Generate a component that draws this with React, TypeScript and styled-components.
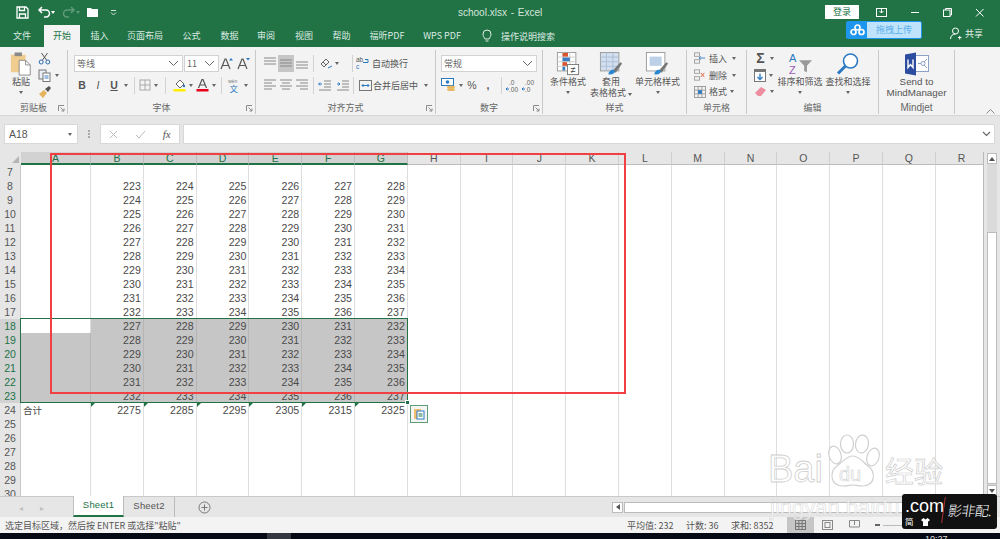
import React from 'react';
import styled, { createGlobalStyle } from 'styled-components';

const GlobalStyle = createGlobalStyle`
  html, body { margin: 0; padding: 0; background: #000; }
  * { box-sizing: border-box; }
  body { font-family: "Noto Sans CJK SC", "Liberation Sans", sans-serif; }
`;

const Page = styled.div`
  position: relative;
  width: 1000px;
  height: 539px;
  overflow: hidden;
  background: #f3f3f3;
  color: #444;
`;

/* ---------- title ---------- */
const TitleBar = styled.div`
  display: flex;
  align-items: center;
  height: 24px;
  background: #217346;
  color: #e8f0ea;
  padding-left: 14px;
`;
const Qat = styled.div`
  display: flex;
  align-items: center;
  width: 340px;
`;
const DocTitle = styled.div`
  width: 471px;
  padding-left: 104px;
  font: 10px "Liberation Sans", sans-serif;
  word-spacing: 1px;
  color: #d7e6dc;
`;
const Login = styled.div`
  width: 34px;
  height: 14px;
  background: #fff;
  color: #217346;
  font-size: 9px;
  line-height: 14px;
  text-align: center;
`;
const WinButtons = styled.div`
  display: flex;
  align-items: center;
  margin-left: 17px;
  gap: 23px;
`;

const TabRow = styled.div`
  position: relative;
  display: flex;
  align-items: flex-end;
  height: 23px;
  background: #217346;
`;
const Tab = styled.div<{ $w: number; $active?: boolean }>`
  width: ${(p) => p.$w}px;
  height: 22px;
  text-align: center;
  font-size: 9px;
  line-height: 21px;
  color: ${(p) => (p.$active ? '#217346' : '#dcebe2')};
  background: ${(p) => (p.$active ? '#f3f3f3' : 'transparent')};
`;
const SearchTab = styled.div`
  display: flex;
  align-items: center;
  gap: 9px;
  margin-left: 12px;
  height: 22px;
  font-size: 9px;
  color: #dcebe2;
`;
const Upload = styled.div`
  position: absolute;
  left: 846px;
  top: -3px;
  display: flex;
  width: 76px;
  height: 18px;
  border-radius: 2px;
  overflow: hidden;
  border: 1px solid #1e96ee;
  background: #1e96ee;
`;
const UploadMark = styled.svg`
  position: absolute;
  left: 3px;
  top: 2px;
`;
const UploadLabel = styled.div`
  flex: 1;
  margin-left: 20px;
  background: #bfe3fa;
  color: #58aeea;
  font-size: 9px;
  line-height: 15px;
  text-align: center;
`;
const Share = styled.div`
  position: absolute;
  left: 950px;
  top: 3px;
  display: flex;
  align-items: center;
  gap: 3px;
  font-size: 9px;
  color: #e3eee7;
`;

/* ---------- ribbon ---------- */
const Ribbon = styled.div`
  position: relative;
  display: flex;
  height: 69px;
  background: #f3f3f3;
  border-bottom: 1px solid #d6d6d6;
  font-size: 9px;
  color: #555;
`;
const Group = styled.div<{ $w: number }>`
  position: relative;
  display: flex;
  flex-direction: column;
  width: ${(p) => p.$w}px;
  height: 64px;
  margin-top: 3px;
  border-right: 1px solid #c9c9c9;
`;
const GroupBody = styled.div`
  display: flex;
  flex: 1;
  min-height: 0;
`;
const GroupLabel = styled.div<{ $latin?: boolean }>`
  height: 14px;
  text-align: center;
  font: ${(p) => (p.$latin ? '10px/15px "Liberation Sans", sans-serif' : '9px/15px "Noto Sans CJK SC", sans-serif')};
  color: #666;
`;
const LauncherMark = styled.svg`
  position: absolute;
  right: 2px;
  bottom: 2px;
`;
const Launcher = () => (
  <LauncherMark width="7" height="7" viewBox="0 0 7 7" fill="none" stroke="#8a8a8a">
    <path d="M.5 6V.5H6M2.5 2.5L6 6M6 3.5V6H3.5" />
  </LauncherMark>
);
const CollapseMark = styled.svg`
  position: absolute;
  left: 986px;
  top: 62px;
`;
const ToolColumn = styled.div<{ $w?: number; $pad?: number }>`
  display: flex;
  flex-direction: column;
  width: ${(p) => (p.$w ? `${p.$w}px` : 'auto')};
  padding-left: ${(p) => p.$pad ?? 0}px;
`;
const ToolRow = styled.div<{ $gap?: number; $h?: number }>`
  display: flex;
  align-items: center;
  gap: ${(p) => p.$gap ?? 0}px;
  height: ${(p) => p.$h ?? 17}px;
`;
const Space = styled.span<{ $w: number }>`
  flex: none;
  width: ${(p) => p.$w}px;
`;
const Caret = styled.span<{ $mx?: number; $mt?: number; $color?: string }>`
  display: inline-block;
  flex: none;
  width: 0;
  height: 0;
  margin: ${(p) => p.$mt ?? 0}px ${(p) => p.$mx ?? 0}px 0;
  border-left: 2.5px solid transparent;
  border-right: 2.5px solid transparent;
  border-top: 3px solid ${(p) => p.$color ?? '#666'};
`;
const VSep = styled.span<{ $mx?: number }>`
  flex: none;
  width: 1px;
  height: 17px;
  margin: 0 ${(p) => p.$mx ?? 4}px;
  background: #d2d2d2;
`;
const BigButton = styled.div<{ $w: number; $latin?: boolean; $pl?: number }>`
  display: flex;
  flex-direction: column;
  align-items: center;
  flex: none;
  width: ${(p) => p.$w}px;
  padding: 2px 0 0 ${(p) => p.$pl ?? 0}px;
  font: ${(p) => (p.$latin ? '9.8px/11px "Liberation Sans", sans-serif' : '9px/11px "Noto Sans CJK SC", sans-serif')};
  color: #555;
  white-space: nowrap;
  svg { display: block; flex: none; height: 24px; }
`;
const SelectBox = styled.div<{ $w: number }>`
  display: flex;
  align-items: center;
  justify-content: space-between;
  width: ${(p) => p.$w}px;
  height: 17px;
  padding: 0 3px 0 2px;
  background: #fff;
  border: 1px solid #d2d2d2;
  font-size: 9px;
  color: #666;
`;
const Chevron = () => (
  <svg width="11" height="7" viewBox="0 0 11 7"><path d="M1 1l4.5 4.5L10 1" fill="none" stroke="#666" /></svg>
);
const Letter = styled.span<{ $w: number; $style?: string; $under?: boolean }>`
  flex: none;
  width: ${(p) => p.$w}px;
  text-align: center;
  font: ${(p) => p.$style ?? 'bold'} 10.5px "Liberation Sans", sans-serif;
  text-decoration: ${(p) => (p.$under ? 'underline' : 'none')};
  color: #555;
`;
const Sigma = styled.span`
  flex: none;
  width: 13px;
  text-align: center;
  font: bold 14px/14px "Liberation Sans", sans-serif;
  color: #555;
`;
const AlignSlot = styled.span<{ $on?: boolean }>`
  display: flex;
  align-items: center;
  justify-content: center;
  flex: none;
  width: 16px;
  height: 17px;
  background: ${(p) => (p.$on ? '#c6c6c6' : 'transparent')};
`;
const Smalltext = styled.span<{ $ml?: number }>`
  margin-left: ${(p) => p.$ml ?? 0}px;
  font-size: 9px;
  white-space: nowrap;
`;

const Lines = ({ kind }: { kind: 'l' | 'c' | 'r' | 't' | 'm' | 'b' }) => {
  const y = kind === 't' ? [3, 6, 9] : kind === 'b' ? [7, 10, 13] : kind === 'm' ? [5, 8, 11] : [3, 6, 9, 12];
  const span = (i: number) => {
    if (kind === 't' || kind === 'm' || kind === 'b') return [2, 14];
    const len = i % 2 ? 8 : 12;
    if (kind === 'l') return [2, 2 + len];
    if (kind === 'r') return [14 - len, 14];
    return [8 - len / 2, 8 + len / 2];
  };
  return (
    <svg width="16" height="16" viewBox="0 0 16 16">
      {y.map((v, i) => (
        <line key={v} x1={span(i)[0]} x2={span(i)[1]} y1={v} y2={v} stroke="#888" />
      ))}
    </svg>
  );
};

const PasteIcon = () => (
  <svg width="24" height="26" viewBox="0 0 24 26">
    <rect x="1" y="3" width="16" height="19" fill="#f0cd8e" />
    <rect x="5" y="0.5" width="8" height="4" fill="#8a8a8a" />
    <path d="M10 9h7l5 5v11H10z" fill="#fff" stroke="#888" />
    <path d="M17 9v5h5" fill="none" stroke="#888" />
  </svg>
);
const ScissorIcon = () => (
  <svg width="13" height="13" viewBox="0 0 13 13" fill="none" stroke="#2b6cb0">
    <circle cx="3.2" cy="10" r="2" />
    <circle cx="9.8" cy="10" r="2" />
    <path d="M4.3 8.3L9.5 1M8.7 8.3L3.5 1" stroke="#555" />
  </svg>
);
const CopyIcon = () => (
  <svg width="13" height="13" viewBox="0 0 13 13" fill="#fff" stroke="#777">
    <rect x="1" y="1" width="7" height="9" fill="#e8f0f8" />
    <rect x="5" y="4" width="7" height="8.5" />
    <path d="M6.5 7h4M6.5 9h4" stroke="#3b7dc0" />
  </svg>
);
const BrushIcon = () => (
  <svg width="14" height="13" viewBox="0 0 14 13">
    <path d="M1 9l5-4 3 3-4 5z" fill="#e4b45f" />
    <path d="M7 4l4-3 2 2-3 4z" fill="#555" />
  </svg>
);
const FontGrow = ({ up }: { up: boolean }) => (
  <svg width="14" height="13" viewBox="0 0 14 13">
    <path d="M1 12L5 2h1l4 10M3 8.5h5" fill="none" stroke="#555" strokeWidth="1.2" />
    <path d={up ? 'M9 3.5L11 1l2 2.5z' : 'M9 1l2 2.5L13 1z'} fill="#2b79c2" />
  </svg>
);
const BorderIcon = () => (
  <svg width="12" height="12" viewBox="0 0 12 12" fill="none" stroke="#aaa">
    <rect x="1" y="1" width="10" height="10" />
    <path d="M6 1v10M1 6h10" />
  </svg>
);
const FillIcon = () => (
  <svg width="13" height="14" viewBox="0 0 13 14">
    <path d="M3 6l4-4 4 4-4 4z" fill="#fff" stroke="#666" />
    <circle cx="11" cy="8" r="1.2" fill="#2b79c2" />
    <rect x="0.5" y="11" width="12" height="2.5" fill="#ffee00" />
  </svg>
);
const ColorIcon = () => (
  <svg width="13" height="14" viewBox="0 0 13 14">
    <path d="M2.5 10L6 1.5h1L10.5 10M4 7h5" fill="none" stroke="#555" strokeWidth="1.2" />
    <rect x="0.5" y="11" width="12" height="2.5" fill="#e8001c" />
  </svg>
);
const PinyinIcon = () => (
  <svg width="14" height="16" viewBox="0 0 14 16">
    <text x="1" y="6" fontSize="5" fontFamily="Liberation Sans" fill="#777">wén</text>
    <text x="2.5" y="15" fontSize="8.5" fontFamily="Noto Sans CJK SC" fill="#2b79c2">文</text>
  </svg>
);
const OrientIcon = () => (
  <svg width="14" height="13" viewBox="0 0 14 13" fill="none" stroke="#666">
    <path d="M2 7l5-5 3 3-5 5zM4 5l3 3" />
    <path d="M9 11l4-2" stroke="#2b79c2" />
  </svg>
);
const WrapIcon = () => (
  <svg width="14" height="14" viewBox="0 0 14 14">
    <text x="0" y="6" fontSize="6.5" fontFamily="Liberation Sans" fill="#555">ab</text>
    <text x="0" y="13" fontSize="6.5" fontFamily="Liberation Sans" fill="#2b79c2">c</text>
    <path d="M9 3.5h3v3H7" fill="none" stroke="#2b79c2" />
  </svg>
);
const IndentIcon = ({ right }: { right?: boolean }) => (
  <svg width="14" height="13" viewBox="0 0 14 13">
    <path d="M6 2h7M6 5h7M6 8h7M1 11h12" stroke="#888" />
    <path d={right ? 'M1 5h3M2.5 3.5L4 5 2.5 6.5' : 'M1 5h3M2 3.5L.5 5 2 6.5'} stroke="#2b79c2" fill="none" />
  </svg>
);
const MergeIcon = () => (
  <svg width="13" height="13" viewBox="0 0 13 13" fill="none">
    <rect x="0.5" y="1.5" width="12" height="10" stroke="#777" />
    <path d="M3 6.5h7M3 6.5l1.5-1.5M3 6.5L4.5 8M10 6.5L8.5 5M10 6.5L8.5 8" stroke="#2b79c2" />
  </svg>
);
const MoneyIcon = () => (
  <svg width="16" height="14" viewBox="0 0 16 14">
    <rect x="0.5" y="0.5" width="12" height="7" fill="#fff" stroke="#2b79c2" />
    <circle cx="6.5" cy="4" r="1.8" fill="#2b79c2" />
    <ellipse cx="10" cy="9" rx="4" ry="1.5" fill="#e8b860" />
    <ellipse cx="10" cy="11.5" rx="4" ry="1.5" fill="#e8b860" />
  </svg>
);
const DecIcon = ({ top, bottom }: { top: string; bottom: string }) => (
  <svg width="15" height="15" viewBox="0 0 15 15">
    <text x="3" y="6.5" fontSize="6.5" fontFamily="Liberation Sans" fill="#666">{top}</text>
    <text x="3" y="13.5" fontSize="6.5" fontFamily="Liberation Sans" fill="#666">{bottom}</text>
    <path d="M0 11h3M1.5 9.5L0 11l1.5 1.5" stroke="#2b79c2" fill="none" />
  </svg>
);
const CondIcon = () => (
  <svg width="24" height="26" viewBox="0 0 24 26">
    <rect x="0.5" y="0.5" width="20" height="20" fill="#fff" stroke="#999" />
    <path d="M0.5 5.5h20M0.5 10.5h20M0.5 15.5h20M7 .5v20M14 .5v20" stroke="#ccc" />
    <rect x="6" y="1" width="6" height="4" fill="#d8552f" />
    <rect x="6" y="6" width="8" height="4" fill="#3b7dc0" />
    <rect x="6" y="11" width="5" height="4" fill="#d8552f" />
    <rect x="6" y="16" width="3" height="4" fill="#3b7dc0" />
    <rect x="11.5" y="13.5" width="12" height="11" fill="#fff" stroke="#777" />
    <text x="14.5" y="23" fontSize="10" fill="#444" fontFamily="Liberation Sans">≠</text>
  </svg>
);
const TableIcon = ({ cell }: { cell?: boolean }) => (
  <svg width="25" height="26" viewBox="0 0 25 26">
    <rect x="0.5" y="0.5" width="20" height="20" fill={cell ? '#fff' : '#d3dfee'} stroke="#999" />
    {cell ? <rect x="4" y="5" width="13" height="10" fill="#bcd0e8" /> : <path d="M0.5 5.5h20M0.5 10.5h20M0.5 15.5h20M7 .5v20M14 .5v20" stroke="#a9bdd6" />}
    <path d="M14 20l8-9 2 1.5-7 10z" fill="#777" />
    <path d="M9 24c1-4 4-6 7-4 1 3-3 5-7 4z" fill="#2b87d1" />
  </svg>
);
const InsertIcon = ({ x }: { x?: boolean }) => (
  <svg width="12" height="12" viewBox="0 0 14 13" fill="none" stroke="#999">
    <rect x="0.5" y="0.5" width="6" height="4" />
    <rect x="0.5" y="8.5" width="6" height="4" />
    {x ? <path d="M8 4l4 5M12 4L8 9" stroke="#d8552f" /> : <path d="M13 6.5H6M8 4.5l-2 2 2 2" stroke="#2b79c2" />}
  </svg>
);
const FormatIcon = () => (
  <svg width="12" height="12" viewBox="0 0 13 13" fill="none" stroke="#999">
    <rect x="0.5" y="0.5" width="12" height="12" />
    <path d="M.5 4.5h12M.5 8.5h12M4.5 .5v12M8.5 .5v12" />
    <rect x="4.5" y="4.5" width="4" height="4" fill="#2b79c2" stroke="none" />
  </svg>
);
const FillDown = () => (
  <svg width="12" height="13" viewBox="0 0 12 13">
    <rect x="0.5" y="0.5" width="11" height="12" fill="#fff" stroke="#777" />
    <rect x="0.5" y="0.5" width="11" height="2.5" fill="#777" />
    <path d="M6 4.5v6M3.5 8L6 10.5 8.5 8" stroke="#2b79c2" fill="none" strokeWidth="1.3" />
  </svg>
);
const EraserIcon = () => (
  <svg width="13" height="11" viewBox="0 0 13 11">
    <path d="M1 7l6-6 5 3-5 6H4z" fill="#ec8da0" />
  </svg>
);
const SortIcon = () => (
  <svg width="30" height="26" viewBox="0 0 30 26">
    <text x="3" y="11" fontSize="12" fontFamily="Liberation Sans" fill="#2b79c2">A</text>
    <text x="3" y="24" fontSize="12" fontFamily="Liberation Sans" fill="#9b59b6">Z</text>
    <path d="M14 9h14l-5.5 6v7l-3-1.5V15z" fill="#999" />
  </svg>
);
const FindIcon = () => (
  <svg width="24" height="24" viewBox="0 0 24 24" fill="none">
    <circle cx="14.5" cy="9" r="7" stroke="#2b79c2" strokeWidth="1.6" fill="#fff" />
    <path d="M9.5 14L2 21.5" stroke="#2b79c2" strokeWidth="3" />
  </svg>
);
const MindIcon = () => (
  <svg width="24" height="23" viewBox="0 0 24 23">
    <rect x="6" y="3" width="17.5" height="16" fill="#fff" stroke="#8fa0c8" />
    <path d="M13 11h3M19 9.500l3-3M19 12.500l3 3" stroke="#8fa0c8" fill="none" />
    <circle cx="18" cy="11" r="2" fill="none" stroke="#8fa0c8" />
    <path d="M0 2l11-2v23L0 21z" fill="#2c4d9f" />
    <path d="M3 7v8l2.5-3L8 15V7" fill="none" stroke="#fff" strokeWidth="1.4" />
  </svg>
);

/* ---------- formula ---------- */
const FormulaBar = styled.div`
  display: flex;
  align-items: center;
  height: 36px;
  padding: 0 5px 0 4px;
  background: #e6e6e6;
`;
const NameBox = styled.div`
  display: flex;
  align-items: center;
  justify-content: space-between;
  width: 74px;
  height: 20px;
  padding: 0 5px 0 4px;
  background: #fff;
  border: 1px solid #d8d8d8;
  font: 10.5px "Liberation Sans", sans-serif;
  color: #555;
`;
const Dots = styled.div`
  width: 2px;
  height: 8px;
  margin: 0 10px;
  border-left: 2px dotted #aaa;
`;
const FnBox = styled.div`
  display: flex;
  align-items: center;
  justify-content: space-around;
  width: 80px;
  height: 20px;
  background: #fff;
  border: 1px solid #d8d8d8;
`;
const FxMark = styled.span`
  font: italic 11px "Liberation Serif", serif;
  color: #555;
`;
const FormulaInput = styled.div`
  display: flex;
  align-items: center;
  justify-content: flex-end;
  flex: 1;
  height: 20px;
  margin-left: 3px;
  padding-right: 3px;
  background: #fff;
  border: 1px solid #d8d8d8;
`;

/* ---------- sheet ---------- */
const Sheet = styled.div`
  position: relative;
  height: 344px;
  display: flex;
  background: #e6e6e6;
  overflow: hidden;
`;
const GridArea = styled.div`
  width: 984px;
  height: 344px;
  overflow: hidden;
  background: #fff;
  border-right: 1px solid #b9b9b9;
`;
const ColHeaders = styled.div`
  display: grid;
  grid-template-columns: 21px 70px repeat(17, 52.8px);
  height: 13px;
  background: #e6e6e6;
`;
const Corner = styled.div`
  position: relative;
  background: #e6e6e6;
  &::after {
    content: '';
    position: absolute;
    right: 2px;
    bottom: 2px;
    border-left: 7px solid transparent;
    border-bottom: 7px solid #b5b5b5;
  }
`;
const ColHead = styled.div<{ $sel?: boolean }>`
  height: 13px;
  text-align: center;
  font: 10.5px/13px "Liberation Sans", sans-serif;
  color: ${(p) => (p.$sel ? '#217346' : '#555')};
  background: ${(p) => (p.$sel ? '#d2d2d2' : '#e6e6e6')};
  border-right: 1px solid ${(p) => (p.$sel ? '#bdbdbd' : '#cfcfcf')};
  border-bottom: ${(p) => (p.$sel ? '2px solid #217346' : '1px solid #bcbcbc')};
`;
const Row = styled.div`
  display: grid;
  grid-template-columns: 21px 70px repeat(17, 52.8px);
  height: 14px;
`;
const RowHead = styled.div<{ $sel?: boolean }>`
  text-align: center;
  font: 10.5px/14px "Liberation Sans", sans-serif;
  color: ${(p) => (p.$sel ? '#217346' : '#555')};
  background: ${(p) => (p.$sel ? '#d2d2d2' : '#e6e6e6')};
  border-bottom: 1px solid ${(p) => (p.$sel ? '#bdbdbd' : '#cfcfcf')};
  border-right: 1px solid #c8c8c8;
`;
const Cell = styled.div<{ $shade?: boolean; $flag?: boolean; $text?: boolean }>`
  position: relative;
  padding: 0 2px;
  text-align: ${(p) => (p.$text ? 'left' : 'right')};
  font: ${(p) => (p.$text ? '9.5px/14px "Noto Sans CJK SC", sans-serif' : '10.6px/15px "Liberation Sans", sans-serif')};
  color: #4a4a4a;
  background: ${(p) => (p.$shade ? '#c6c6c6' : '#fff')};
  border-right: 1px solid ${(p) => (p.$shade ? '#b5b5b5' : '#dedede')};
  border-bottom: 1px solid ${(p) => (p.$shade ? '#b5b5b5' : '#e2e2e2')};
  &::before {
    content: ${(p) => (p.$flag ? "''" : 'none')};
    position: absolute;
    left: 0;
    top: 0;
    border-top: 4px solid #217346;
    border-right: 4px solid transparent;
  }
`;
const SelectionBox = styled.div`
  position: absolute;
  left: 20px;
  top: 166px;
  width: 388px;
  height: 85px;
  border: 1.5px solid #217346;
  pointer-events: none;
`;
const Handle = styled.div`
  position: absolute;
  right: -3px;
  bottom: -3px;
  width: 5px;
  height: 5px;
  background: #217346;
  border: 1px solid #fff;
`;
const PasteOptions = styled.div`
  position: absolute;
  left: 410px;
  top: 253px;
  display: flex;
  align-items: center;
  justify-content: center;
  width: 18px;
  height: 18px;
  background: #f4f4f4;
  border: 1px solid #5d9d78;
`;
const RedBox = styled.div`
  position: absolute;
  left: 50px;
  top: 1px;
  width: 576px;
  height: 241px;
  border: 2.5px solid #f23f42;
  pointer-events: none;
`;
const VScroll = styled.div`
  display: flex;
  flex-direction: column;
  width: 16px;
  height: 344px;
  padding: 1px 3px 0;
  background: #e6e6e6;
`;
const VTrack = styled.div`
  display: flex;
  flex-direction: column;
  height: 343px;
  background: #dadada;
`;
const ScrollArrow = styled.div`
  display: flex;
  align-items: center;
  justify-content: center;
  flex: none;
  height: 11px;
  background: #fff;
  border: 1px solid #bbb;
`;
const VThumb = styled.div`
  height: 252px;
  margin: 68px 0 1px;
  background: #fff;
  border: 1px solid #bbb;
`;

/* ---------- bottom ---------- */
const TabsBar = styled.div`
  display: flex;
  align-items: flex-end;
  height: 21px;
  background: #e6e6e6;
  border-top: 1px solid #c9c9c9;
`;
const NavArrows = styled.div`
  display: flex;
  justify-content: space-around;
  align-items: center;
  width: 73px;
  height: 20px;
  padding: 0 20px 0 10px;
  color: #c0c0c0;
  font-size: 8px;
`;
const SheetTab = styled.div<{ $active?: boolean }>`
  width: 51px;
  height: ${(p) => (p.$active ? '21px' : '20px')};
  text-align: center;
  font: 9.5px/18px "Liberation Sans", sans-serif;
  letter-spacing: 0.2px;
  color: ${(p) => (p.$active ? '#217346' : '#555')};
  background: ${(p) => (p.$active ? '#fff' : 'transparent')};
  border-left: ${(p) => (p.$active ? '1px solid #c0c0c0' : 0)};
  border-right: 1px solid #bbb;
  border-bottom: ${(p) => (p.$active ? '2px solid #217346' : 0)};
`;
const AddSheet = styled.div`
  display: flex;
  align-items: center;
  height: 20px;
  margin-left: 23px;
`;
const HScroll = styled.div`
  display: flex;
  align-items: center;
  margin-left: 401px;
  height: 20px;
  width: 376px;
`;
const HArrow = styled(ScrollArrow)`
  width: 11px;
`;
const HThumb = styled.div`
  flex: 1;
  height: 11px;
  margin-left: 1px;
  background: #fff;
  border: 1px solid #bbb;
`;
const StatusBar = styled.div`
  display: flex;
  align-items: center;
  height: 16px;
  padding-left: 5px;
  background: #f3f3f3;
  font-size: 9px;
  color: #555;
`;
const StatusMsg = styled.div`
  width: 622px;
`;
const Stat = styled.div<{ $w: number }>`
  width: ${(p) => p.$w}px;
  font-size: 9px;
`;
const ViewBtn = styled.div<{ $on?: boolean }>`
  display: flex;
  align-items: center;
  justify-content: center;
  width: 27px;
  height: 16px;
  background: ${(p) => (p.$on ? '#c6c6c6' : 'transparent')};
`;
const ZoomMinus = styled.div`
  width: 5px;
  height: 2px;
  margin-left: 7px;
  background: #666;
`;
const ZoomTrack = styled.div`
  width: 40px;
  height: 1px;
  margin-left: 3px;
  background: #bbb;
`;
const Taskbar = styled.div`
  position: relative;
  height: 6px;
  background: #050a14;
  overflow: hidden;
`;
const TaskItem = styled.div`
  position: absolute;
  left: 267px;
  top: 0;
  width: 24px;
  height: 6px;
  background: #33373f;
`;
const Clock = styled.div`
  position: absolute;
  left: 925px;
  top: 1px;
  font: 9px/10px "Liberation Sans", sans-serif;
  color: #ddd;
`;

/* ---------- watermark ---------- */
const Watermark = styled.div`
  position: absolute;
  left: 768px;
  top: 434px;
  width: 200px;
  pointer-events: none;
`;
const MarkMain = styled.div`
  display: flex;
  align-items: flex-end;
  height: 54px;
`;
const MarkWord = styled.span`
  font: 38px/38px "Liberation Sans", sans-serif;
  color: rgba(255, 255, 255, 0.75);
  -webkit-text-stroke: 0.8px #cfcfcf;
`;
const MarkJing = styled.span`
  margin-left: 2px;
  font: 29px/36px "Noto Sans CJK SC", sans-serif;
  color: rgba(255, 255, 255, 0.75);
  -webkit-text-stroke: 0.7px #cfcfcf;
`;
const Paw = styled.div`
  position: relative;
  flex: none;
  width: 60px;
  height: 54px;
`;
const PawText = styled.span`
  position: absolute;
  left: 16px;
  top: 30px;
  font: 20px/20px "Liberation Sans", sans-serif;
  color: rgba(255, 255, 255, 0.75);
  -webkit-text-stroke: 0.6px #cfcfcf;
`;
const MarkSub = styled.div`
  margin: 8px 0 0 2px;
  font: 22px/24px "Liberation Sans", sans-serif;
  white-space: nowrap;
  color: rgba(255, 255, 255, 0.65);
  -webkit-text-stroke: 0.5px #d4d4d4;
`;
const Badge = styled.div`
  position: absolute;
  left: 902px;
  top: 494px;
  width: 95px;
  height: 35px;
  padding: 3px;
  border-radius: 3px;
  background: #111;
  color: #fff;
  overflow: hidden;
`;
const BadgeCom = styled.div`
  font: 18px/18px "Liberation Sans", sans-serif;
`;
const BadgeSmall = styled.div`
  display: flex;
  gap: 7px;
  align-items: center;
  margin-top: 1px;
  font-size: 8.5px;
  line-height: 11px;
`;
const Signature = styled.div`
  position: absolute;
  left: 41px;
  top: 3px;
  padding-left: 4px;
  border-left: 1px solid #a33;
  font: 300 14px/26px "Noto Sans CJK SC", sans-serif;
  letter-spacing: -0.5px;
  transform: skewX(-8deg);
`;

const columns = 'ABCDEFGHIJKLMNOPQR'.split('');

// 行号 -> 数值
const cellValue = (row: number, col: number) => {
  if (row >= 8 && row <= 17) return 223 + (row - 8) + col;
  if (row >= 18 && row <= 23) return 227 + (row - 18) + col;
  if (row === 24) return 2275 + col * 10;
  return null;
};

const rows = Array.from({ length: 24 }, (_, i) => i + 7);

const App = () => (
  <Page>
    <GlobalStyle />
    <TitleBar>
      <Qat>
        <Space $w={2} />
        <svg width="13" height="13" viewBox="0 0 13 13" fill="none" stroke="#fff" strokeWidth="1.3">
          <path d="M1 1h9l2 2v9H1z" />
          <path d="M3.5 1v3.5h5V1M3.5 12V8h6v4" />
        </svg>
        <Space $w={8} />
        <svg width="14" height="12" viewBox="0 0 14 12" fill="none" stroke="#fff" strokeWidth="1.5">
          <path d="M5 1L2 4l3 3M2 4h7a3.5 3.5 0 0 1 0 7H7" />
        </svg>
        <Caret $color="#fff" />
        <Space $w={7} />
        <svg width="14" height="12" viewBox="0 0 14 12" fill="none" stroke="#5f9a7a" strokeWidth="1.5">
          <path d="M9 1l3 3-3 3M12 4H5a3.5 3.5 0 0 0 0 7h2" />
        </svg>
        <Caret $color="#5f9a7a" />
        <Space $w={6} />
        <svg width="13" height="11" viewBox="0 0 13 11" fill="#fff">
          <path d="M1 1h4l1 1h6v8H1z" />
        </svg>
        <Space $w={11} />
        <svg width="7" height="7" viewBox="0 0 7 7" fill="none" stroke="#d5e4da">
          <path d="M1 1.5h5M1 3.5l2.5 2.500L6 3.5" />
        </svg>
      </Qat>
      <DocTitle>school.xlsx - Excel</DocTitle>
      <Login>登录</Login>
      <WinButtons>
        <svg width="11" height="9" viewBox="0 0 11 9" fill="none" stroke="#fff"><rect x="0.5" y="0.5" width="10" height="8" /><path d="M5.5 1v4M3.5 3l2 2 2-2" /></svg>
        <svg width="10" height="9" viewBox="0 0 10 9" stroke="#fff"><path d="M1 4.5h8" /></svg>
        <svg width="9" height="9" viewBox="0 0 9 9" fill="none" stroke="#fff"><rect x="0.5" y="2" width="6.5" height="6.5" /><path d="M2.5 2V.5h6V7H7" /></svg>
        <svg width="9" height="9" viewBox="0 0 9 9" stroke="#fff"><path d="M1 1l7.5 7.5M8.5 1L1 8.5" /></svg>
      </WinButtons>
    </TitleBar>

    <TabRow>
      <Tab $w={44}>文件</Tab>
      <Tab $w={36} $active>开始</Tab>
      <Tab $w={39}>插入</Tab>
      <Tab $w={52}>页面布局</Tab>
      <Tab $w={41}>公式</Tab>
      <Tab $w={35}>数据</Tab>
      <Tab $w={38}>审阅</Tab>
      <Tab $w={38}>视图</Tab>
      <Tab $w={37}>帮助</Tab>
      <Tab $w={54}>福昕PDF</Tab>
      <Tab $w={56}>WPS PDF</Tab>
      <SearchTab>
        <svg width="10" height="14" viewBox="0 0 10 14" fill="none" stroke="#e3eee7">
          <path d="M3 10C2 8 1 7 1 5a4 4 0 0 1 8 0c0 2-1 3-2 5zM3.5 12h3" />
        </svg>
        操作说明搜索
      </SearchTab>
      <Upload>
        <UploadMark width="15" height="12" viewBox="0 0 15 12" fill="none" stroke="#fff" strokeWidth="1.7">
          <circle cx="7.5" cy="3.5" r="2.5" />
          <circle cx="3.5" cy="8" r="2.5" />
          <circle cx="11.5" cy="8" r="2.5" />
        </UploadMark>
        <UploadLabel>拖拽上传</UploadLabel>
      </Upload>
      <Share>
        <svg width="12" height="13" viewBox="0 0 12 13" fill="none" stroke="#fff">
          <circle cx="5.5" cy="4" r="3" />
          <path d="M.5 12c0-3 2-5 5-5M8 10.5h3.5M9.7 9v3.5" />
        </svg>
        共享
      </Share>
    </TabRow>

    <Ribbon>
      <Group $w={68}>
        <GroupBody>
          <BigButton $w={38} $pl={4}>
            <PasteIcon />
            粘贴
            <Caret $mt={4} />
          </BigButton>
          <ToolColumn>
            <ToolRow><ScissorIcon /></ToolRow>
            <ToolRow $gap={4}><CopyIcon /><Caret /></ToolRow>
            <ToolRow><BrushIcon /></ToolRow>
          </ToolColumn>
        </GroupBody>
        <GroupLabel>剪贴板</GroupLabel>
        <Launcher />
      </Group>

      <Group $w={188}>
        <GroupBody>
          <ToolColumn $pad={6}>
            <ToolRow $h={26} $gap={1}>
              <SelectBox $w={109}>等线<Chevron /></SelectBox>
              <SelectBox $w={35}>11<Chevron /></SelectBox>
              <FontGrow up />
              <Space $w={1} />
              <FontGrow up={false} />
            </ToolRow>
            <ToolRow $h={18}>
              <Letter $w={16}>B</Letter>
              <Letter $w={16} $style="italic">I</Letter>
              <Letter $w={16} $under>U</Letter>
              <Caret $mx={2} />
              <VSep $mx={4} />
              <BorderIcon />
              <Caret $mx={3} />
              <VSep $mx={4} />
              <Space $w={3} />
              <FillIcon />
              <Caret $mx={3} />
              <ColorIcon />
              <Caret $mx={3} />
              <VSep $mx={2} />
              <Space $w={3} />
              <PinyinIcon />
              <Caret $mx={3} />
            </ToolRow>
          </ToolColumn>
        </GroupBody>
        <GroupLabel>字体</GroupLabel>
        <Launcher />
      </Group>

      <Group $w={180}>
        <GroupBody>
          <ToolColumn $pad={6}>
            <ToolRow $h={26}>
              <AlignSlot><Lines kind="t" /></AlignSlot>
              <AlignSlot $on><Lines kind="m" /></AlignSlot>
              <AlignSlot><Lines kind="b" /></AlignSlot>
              <VSep $mx={3} />
              <Space $w={2} />
              <OrientIcon />
              <Caret $mx={2} />
              <Space $w={8} />
              <VSep $mx={3} />
              <WrapIcon />
              <Smalltext $ml={2}>自动换行</Smalltext>
            </ToolRow>
            <ToolRow $h={18}>
              <AlignSlot><Lines kind="l" /></AlignSlot>
              <AlignSlot><Lines kind="c" /></AlignSlot>
              <AlignSlot><Lines kind="r" /></AlignSlot>
              <VSep $mx={3} />
              <Space $w={1} />
              <IndentIcon />
              <Space $w={4} />
              <IndentIcon right />
              <VSep $mx={3} />
              <Space $w={2} />
              <MergeIcon />
              <Smalltext $ml={1}>合并后居中</Smalltext>
              <Caret $mx={6} />
            </ToolRow>
          </ToolColumn>
        </GroupBody>
        <GroupLabel>对齐方式</GroupLabel>
        <Launcher />
      </Group>

      <Group $w={107}>
        <GroupBody>
          <ToolColumn $pad={5}>
            <ToolRow $h={26}>
              <SelectBox $w={96}>常规<Chevron /></SelectBox>
            </ToolRow>
            <ToolRow $h={18}>
              <MoneyIcon />
              <Caret $mx={2} />
              <Letter $w={14} $style="normal">%</Letter>
              <Letter $w={18}>,</Letter>
              <VSep $mx={4} />
              <DecIcon top=".0" bottom=".00" />
              <Space $w={1} />
              <DecIcon top=".00" bottom=".0" />
            </ToolRow>
          </ToolColumn>
        </GroupBody>
        <GroupLabel>数字</GroupLabel>
        <Launcher />
      </Group>

      <Group $w={144}>
        <GroupBody>
          <BigButton $w={50}><CondIcon />条件格式<Caret $mt={4} /></BigButton>
          <BigButton $w={36}>
            <TableIcon />
            套用
            <span>表格格式 <Caret /></span>
          </BigButton>
          <BigButton $w={57}><TableIcon cell />单元格样式<Caret $mt={4} /></BigButton>
        </GroupBody>
        <GroupLabel>样式</GroupLabel>
      </Group>

      <Group $w={60}>
        <GroupBody>
          <ToolColumn $pad={7}>
            <ToolRow $gap={3}><InsertIcon /><Smalltext>插入</Smalltext><Caret $mx={2} /></ToolRow>
            <ToolRow $gap={3}><InsertIcon x /><Smalltext>删除</Smalltext><Caret $mx={2} /></ToolRow>
            <ToolRow $gap={3}><FormatIcon /><Smalltext>格式</Smalltext><Caret /></ToolRow>
          </ToolColumn>
        </GroupBody>
        <GroupLabel>单元格</GroupLabel>
      </Group>

      <Group $w={132}>
        <GroupBody>
          <ToolColumn $w={29} $pad={7}>
            <ToolRow $gap={3}><Sigma>Σ</Sigma><Caret /></ToolRow>
            <ToolRow $gap={3}><FillDown /><Caret /></ToolRow>
            <ToolRow $gap={3}><EraserIcon /><Caret /></ToolRow>
          </ToolColumn>
          <BigButton $w={48}><SortIcon />排序和筛选<Caret $mt={4} /></BigButton>
          <BigButton $w={48}><FindIcon />查找和选择<Caret $mt={4} /></BigButton>
        </GroupBody>
        <GroupLabel>编辑</GroupLabel>
      </Group>

      <Group $w={76}>
        <GroupBody>
          <BigButton $w={75} $latin><MindIcon /><span>Send to</span><span>MindManager</span></BigButton>
        </GroupBody>
        <GroupLabel $latin>Mindjet</GroupLabel>
      </Group>
      <CollapseMark width="9" height="5" viewBox="0 0 9 5" fill="none" stroke="#888">
        <path d="M.5 4.5l4-4 4 4" />
      </CollapseMark>
    </Ribbon>

    <FormulaBar>
      <NameBox>A18<Caret /></NameBox>
      <Dots />
      <FnBox>
        <svg width="9" height="9" viewBox="0 0 9 9" stroke="#bbb"><path d="M1 1l7 7M8 1L1 8" /></svg>
        <svg width="11" height="9" viewBox="0 0 11 9" fill="none" stroke="#bbb"><path d="M1 5l3 3 6-7" /></svg>
        <FxMark>fx</FxMark>
      </FnBox>
      <FormulaInput>
        <svg width="9" height="6" viewBox="0 0 9 6" fill="none" stroke="#666" strokeWidth="1.2"><path d="M1 1l3.5 3.5L8 1" /></svg>
      </FormulaInput>
    </FormulaBar>

    <Sheet>
      <GridArea>
        <ColHeaders>
          <Corner />
          {columns.map((c, i) => (
            <ColHead key={c} $sel={i < 7}>{c}</ColHead>
          ))}
        </ColHeaders>
        {rows.map((r) => {
          const selected = r >= 18 && r <= 23;
          return (
            <Row key={r}>
              <RowHead $sel={selected}>{r}</RowHead>
              {columns.map((c, i) => {
                const value = i >= 1 && i <= 6 ? cellValue(r, i - 1) : null;
                const shade = selected && i < 7 && !(r === 18 && i === 0);
                const isTotal = r === 24 && i === 0;
                return (
                  <Cell key={c} $shade={shade} $flag={r === 24 && i >= 1 && i <= 6} $text={isTotal}>
                    {isTotal ? '合计' : value}
                  </Cell>
                );
              })}
            </Row>
          );
        })}
      </GridArea>
      <VScroll>
        <VTrack>
          <ScrollArrow>
            <svg width="6" height="4" viewBox="0 0 6 4" fill="#555"><path d="M3 0l3 4H0z" /></svg>
          </ScrollArrow>
          <VThumb />
          <ScrollArrow>
            <svg width="6" height="4" viewBox="0 0 6 4" fill="#555"><path d="M3 4L0 0h6z" /></svg>
          </ScrollArrow>
        </VTrack>
      </VScroll>
      <SelectionBox><Handle /></SelectionBox>
      <PasteOptions>
        <svg width="12" height="12" viewBox="0 0 12 12">
          <rect x="1" y="1" width="7" height="10" fill="#f0c070" />
          <rect x="4" y="3" width="7" height="8" fill="#fff" stroke="#2b79c2" />
          <path d="M5.5 6h4M5.5 8h4" stroke="#217346" />
        </svg>
      </PasteOptions>
      <RedBox />
    </Sheet>

    <TabsBar>
      <NavArrows><span>◂</span><span>▸</span></NavArrows>
      <SheetTab $active>Sheet1</SheetTab>
      <SheetTab>Sheet2</SheetTab>
      <AddSheet>
        <svg width="13" height="13" viewBox="0 0 13 13" fill="none" stroke="#777">
          <circle cx="6.5" cy="6.5" r="5.5" />
          <path d="M3.5 6.5h6M6.5 3.5v6" />
        </svg>
      </AddSheet>
      <HScroll>
        <HArrow>
          <svg width="4" height="6" viewBox="0 0 4 6" fill="#555"><path d="M0 3l4-3v6z" /></svg>
        </HArrow>
        <HThumb />
      </HScroll>
    </TabsBar>

    <StatusBar>
      <StatusMsg>选定目标区域，然后按 ENTER 或选择"粘贴"</StatusMsg>
      <Stat $w={59}>平均值: 232</Stat>
      <Stat $w={45}>计数: 36</Stat>
      <Stat $w={56}>求和: 8352</Stat>
      <ViewBtn $on>
        <svg width="11" height="10" viewBox="0 0 11 10" fill="none" stroke="#777"><rect x="0.5" y="0.5" width="10" height="9" /><path d="M.5 3.5h10M.5 6.5h10M3.8 .5v9M7.2 .5v9" /></svg>
      </ViewBtn>
      <ViewBtn>
        <svg width="11" height="10" viewBox="0 0 11 10" fill="none" stroke="#888"><rect x="0.5" y="0.5" width="10" height="9" /><rect x="3" y="2.5" width="5" height="5" /></svg>
      </ViewBtn>
      <ViewBtn>
        <svg width="11" height="10" viewBox="0 0 11 10" fill="none" stroke="#888"><path d="M.5 7V.5h10V7M.5 7h10M5.5 .5V5" /></svg>
      </ViewBtn>
      <ZoomMinus />
      <ZoomTrack />
    </StatusBar>
    <Taskbar>
      <TaskItem />
      <Clock>10:27</Clock>
    </Taskbar>

    <Watermark>
      <MarkMain>
        <MarkWord>Bai</MarkWord>
        <Paw>
          <svg width="60" height="54" viewBox="0 0 60 54" fill="rgba(255,255,255,0.7)" stroke="#cfcfcf" strokeWidth="1.2">
            <ellipse cx="12" cy="21" rx="6" ry="9" transform="rotate(-18 12 21)" />
            <ellipse cx="24" cy="10" rx="6.5" ry="9" />
            <ellipse cx="39" cy="10" rx="6.5" ry="9" transform="rotate(8 39 10)" />
            <ellipse cx="50" cy="23" rx="6" ry="9" transform="rotate(18 50 23)" />
            <path d="M30 22c6 0 10 6 15 10 8 5 8 20-6 20-4 0-6-1-9-1s-5 1-10 1C7 52 6 37 14 32c6-4 9-10 16-10z" />
          </svg>
          <PawText>du</PawText>
        </Paw>
        <MarkJing>经验</MarkJing>
      </MarkMain>
      <MarkSub>jingyan.baidu.com</MarkSub>
    </Watermark>
    <Badge>
      <BadgeCom>.com</BadgeCom>
      <BadgeSmall>
        <span>简</span>
        <svg width="9" height="8" viewBox="0 0 9 8" fill="#fff"><path d="M2.5 0L0 2l1.5 1.500L2 3v5h5V3l.5.5L9 2 6.5 0 4.500 1.500z" /></svg>
      </BadgeSmall>
      <Signature>影非配.</Signature>
    </Badge>
  </Page>
);

export default App;
